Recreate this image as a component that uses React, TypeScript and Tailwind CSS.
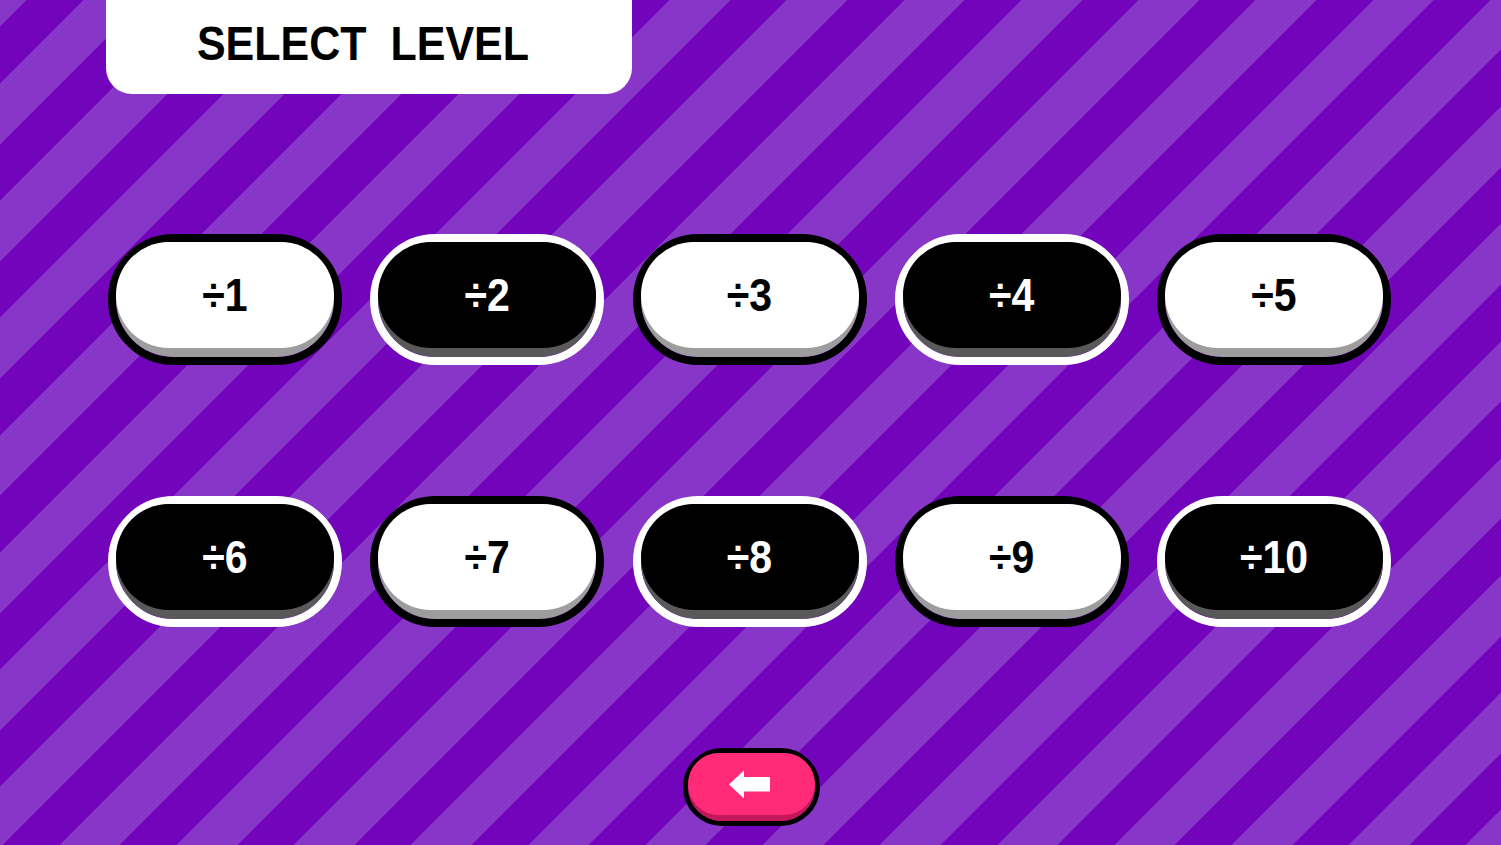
import { FC } from 'react';

type Level = { divisor: number; dark: boolean };

const levels: Level[] = Array.from({ length: 10 }, (_, i) => ({
  divisor: i + 1,
  dark: i % 2 === 1,
}));

const LevelButton: FC<Level> = ({ divisor, dark }) => {
  return (
    <button
      className={
        dark
          ? 'h-[131px] w-[234px] rounded-full border-[8px] border-white p-0'
          : 'h-[131px] w-[234px] rounded-full border-[8px] border-black p-0'
      }
    >
      <div
        className={
          dark
            ? 'h-full w-full rounded-full bg-[#595959]'
            : 'h-full w-full rounded-full bg-[#9d9d9d]'
        }
      >
        <div
          className={
            dark
              ? 'flex h-[106px] w-full items-center justify-center rounded-full bg-black text-white'
              : 'flex h-[106px] w-full items-center justify-center rounded-full bg-white text-black'
          }
        >
          <span className="inline-block scale-y-[1.12] font-['Liberation_Sans',Arial,sans-serif] text-[41px] leading-none font-bold">
            ÷{divisor}
          </span>
        </div>
      </div>
    </button>
  );
};

const BackButton: FC = () => {
  return (
    <button className="h-[78px] w-[137px] rounded-full border-[5px] border-black p-0">
      <div className="h-full w-full rounded-full bg-[#c4175a]">
        <div className="flex h-[62px] w-full items-center justify-center rounded-full bg-[#ff2a78]">
          <svg width="41" height="29" viewBox="0 0 41 29" className="mr-[3px]">
            <polygon
              points="0,14.5 15,0.5 15,7 41,7 41,21.5 15,21.5 15,28.5"
              fill="#fff"
              strokeLinejoin="round"
            />
          </svg>
        </div>
      </div>
    </button>
  );
};

export default function App() {
  return (
    <div className="flex h-[845px] w-full flex-col overflow-hidden bg-[image:repeating-linear-gradient(135deg,#8836c8_0px,#8836c8_19px,#7204bb_19px,#7204bb_59px,#8836c8_59px,#8836c8_82.9px)]">
      <header className="ml-[106px] flex h-[94px] w-[526px] items-center justify-center rounded-b-[26px] bg-white pr-[12px] pb-[6px]">
        <h1 className="inline-block scale-y-[1.1] font-['Liberation_Sans',Arial,sans-serif] text-[43px] leading-none font-bold whitespace-pre text-black">
          SELECT  LEVEL
        </h1>
      </header>

      <div className="mt-[140px] ml-[108px] grid w-fit grid-cols-5 gap-x-[28.25px] gap-y-[131px]">
        {levels.map((level) => (
          <LevelButton key={level.divisor} {...level} />
        ))}
      </div>

      <div className="mt-[121px] flex justify-center pl-[1px]">
        <BackButton />
      </div>
    </div>
  );
}
